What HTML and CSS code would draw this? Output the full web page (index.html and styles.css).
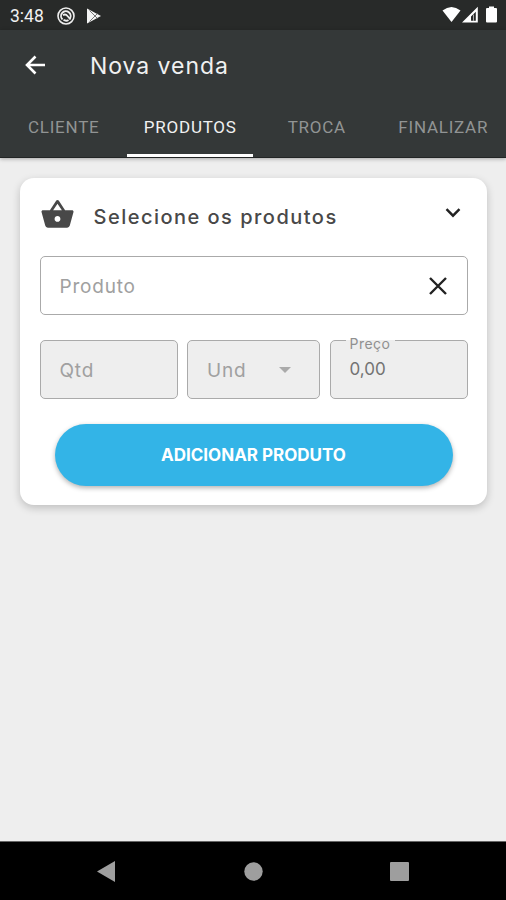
FILE: index.html
```html
<!DOCTYPE html>
<html lang="pt-BR">
<head>
<meta charset="utf-8">
<title>Nova venda</title>
<link rel="stylesheet" href="styles.css">
</head>
<body>
<div class="status">
  <span class="clock">3:48</span>
  <svg class="sync" width="18" height="18" viewBox="0 0 18 18" fill="none" stroke="#eee"><circle cx="9" cy="9" r="8" stroke-width="1.600"/><path d="M5.500 12.500A4.800 4.800 0 1 1 12.800 11.800" stroke-width="1.900"/><path d="M6 8.200Q8.500 6.500 10.500 9L13.500 12.500M6.500 12.800Q9 14.500 11.500 13" stroke-width="1.900"/></svg>
  <svg class="play" width="16" height="16" viewBox="0 0 16 16"><path d="M1 .5L15 8 1 15.500z" fill="#f4f4f4"/><path d="M3.500 2.500l8 8M3.500 13.500l8-8" stroke="#666" stroke-width=".9"/></svg>
  <svg class="signals" width="56" height="18" viewBox="0 0 56 18" fill="#fff"><path d="M.5 4.500Q9.500-2.500 18.500 4.500L9.500 16z"/><path d="M20 16.500L35.800.7v15.800zM29 10.500v4.300h4.800V5.700z" fill-rule="evenodd"/><path d="M31.500 8.500v6.500" stroke="#aaa" stroke-width="1"/><path d="M45 2h2V.5h5V2h2q1 0 1 1v12.500q0 1-1 1h-9q-1 0-1-1V3q0-1 1-1z"/></svg>
</div>
<header>
  <div class="titlebar">
    <svg width="21" height="20" viewBox="0 0 21 20" fill="none" stroke="#fff" stroke-width="2.600"><path d="M20 10H2M10.500 1.500L2 10l8.500 8.500"/></svg>
    <h1>Nova venda</h1>
  </div>
  <nav class="tabs">
    <a><span>CLIENTE</span></a>
    <a class="active"><span>PRODUTOS</span></a>
    <a><span>TROCA</span></a>
    <a><span>FINALIZAR</span></a>
  </nav>
</header>
<main>
  <section class="card">
    <div class="heading">
      <svg class="basket" width="35" height="35" viewBox="0 0 24 24" fill="#484848"><path d="M17.210 9l-4.380-6.560c-.19-.28-.51-.42-.83-.42-.32 0-.64.14-.83.43L6.790 9H2c-.55 0-1 .45-1 1 0 .09.01.18.04.27l2.540 9.270c.23.84 1 1.460 1.920 1.460h13c.92 0 1.690-.62 1.930-1.460l2.540-9.270L23 10c0-.55-.45-1-1-1h-4.790zM9 9l3-4.400L15 9H9zm3 8c-1.100 0-2-.9-2-2s.9-2 2-2 2 .9 2 2-.9 2-2 2z"/></svg>
      <h2>Selecione os produtos</h2>
      <svg class="chevron" width="16" height="10" viewBox="0 0 16 10" fill="none" stroke="#222" stroke-width="2.400"><path d="M1.500 1.200L8 7.700l6.500-6.500"/></svg>
    </div>
    <div class="field product">
      <span class="hint produto">Produto</span>
      <svg width="18" height="18" viewBox="0 0 18 18" stroke="#222" stroke-width="2.400"><path d="M1 1l16 16M17 1L1 17"/></svg>
    </div>
    <div class="row">
      <div class="field off"><span class="hint">Qtd</span></div>
      <div class="field off unit"><span class="hint">Und</span><svg width="12" height="6" viewBox="0 0 12 6"><path d="M0 0h12L6 6z" fill="#aaa"/></svg></div>
      <div class="field off"><span class="label">Preço</span><span class="value">0,00</span></div>
    </div>
    <button><span>ADICIONAR PRODUTO</span></button>
  </section>
</main>
<footer>
  <svg width="18" height="21" viewBox="0 0 18 21"><path d="M0 10.500L18 0v21z" fill="#9e9e9e"/></svg>
  <svg class="home" width="19" height="19" viewBox="0 0 19 19"><circle cx="9.500" cy="9.500" r="9.200" fill="#9e9e9e"/></svg>
  <svg width="19" height="19" viewBox="0 0 19 19"><rect width="19" height="19" rx="1" fill="#9e9e9e"/></svg>
</footer>
</body>
</html>
```
FILE: styles.css
```css
* { box-sizing: border-box; }
body {
  margin: 0;
  width: 506px;
  height: 900px;
  display: flex;
  flex-direction: column;
  overflow: hidden;
  background: #eee;
  font-family: Inter, "Liberation Sans", sans-serif;
}
svg { display: block; flex: none; }
h1, h2 { margin: 0; }
span, h1, h2 { white-space: nowrap; }
.status {
  height: 30px;
  flex: none;
  display: flex;
  align-items: center;
  padding: 1px 8px 0 10px;
  background: #282a29;
}
.clock { width: 47px; color: #f1f1f1; font: 17.5px Roboto, sans-serif; }
.play { margin-left: 11px; }
.signals { margin: -1px 0 0 auto; }
header {
  position: relative;
  height: 128px;
  flex: none;
  background: #343838;
  border-bottom: 1px solid #222525;
  box-shadow: 0 1px 4px rgba(0, 0, 0, .3);
}
.titlebar { height: 69px; display: flex; align-items: center; padding-left: 25px; }
.titlebar h1 {
  margin: 2px 0 0 44px;
  color: #f0f1f1;
  font-size: 23px;
  font-weight: 400;
  letter-spacing: .95px;
}
.tabs { height: 58px; display: grid; grid-template-columns: repeat(4, 1fr); }
.tabs a {
  display: flex;
  justify-content: center;
  align-items: center;
  padding: 1px 0 0 1px;
  color: #919494;
  font: 17px Roboto, sans-serif;
  border-bottom: 3px solid transparent;
  letter-spacing: .75px;
}
.tabs .active { color: #f0f1f1; border-bottom-color: #fff; }
main { flex: 1; padding: 20px 19px 0 20px; }
.card {
  height: 327px;
  padding: 0 19.5px;
  border-radius: 14px;
  background: #fff;
  box-shadow: 0 3px 9px rgba(0, 0, 0, .2);
}
.heading { height: 78px; display: flex; align-items: center; }
.basket { margin: -5px 0 0 0; }
.heading h2 {
  margin: -1px 0 0 19px;
  color: #484848;
  font-size: 20px;
  font-weight: 500;
  letter-spacing: 1.48px;
}
.chevron { margin: -8px 7px 0 auto; }
.field {
  position: relative;
  height: 59px;
  display: flex;
  align-items: center;
  padding: 0 19px;
  border: 1px solid #aaa;
  border-radius: 5px;
}
.product { padding-right: 20px; justify-content: space-between; }
.hint { color: #a0a0a0; font-size: 19px; letter-spacing: .8px; margin-top: 1px; }
.row { display: grid; grid-template-columns: 138px 133px 138px; justify-content: space-between; margin-top: 25px; }
.off { background: #eee; }
.unit { justify-content: space-between; padding-right: 28px; }
.label {
  position: absolute;
  top: -6px;
  left: 15px;
  padding: 0 5px 0 4px;
  color: #909090;
  background: linear-gradient(#fff 0 5px, #eee 5px);
  font-size: 14px;
  line-height: 17px;
  letter-spacing: .45px;
}
.value { color: #737373; font-size: 17px; margin-top: -1px; }
button {
  display: flex;
  justify-content: center;
  align-items: center;
  width: 398px;
  height: 62px;
  margin: 25px 0 0 15px;
  padding: 0;
  border: 0;
  border-radius: 31px;
  background: #33b4e7;
  color: #fff;
  font: 700 17px Inter, sans-serif;
  box-shadow: 0 2px 5px rgba(0, 0, 0, .3);
}
footer {
  height: 59px;
  flex: none;
  display: flex;
  align-items: center;
  justify-content: space-between;
  padding: 0 97px;
  background: #000;
  border-top: 1px solid #666;
}
.home { margin-left: 1px; }
```
